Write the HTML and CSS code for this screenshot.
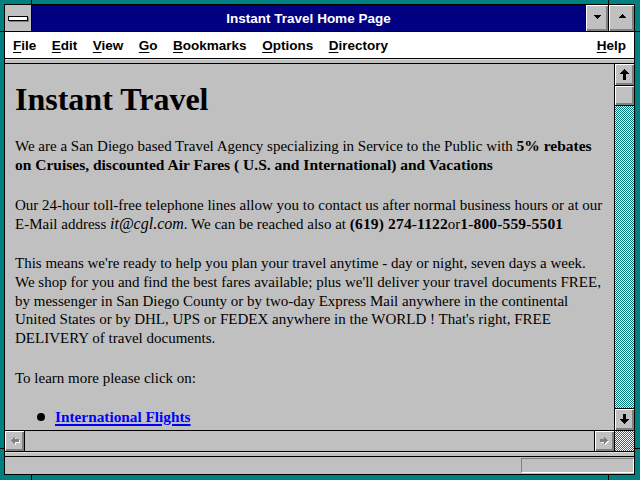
FILE: index.html
```html
<!DOCTYPE html>
<html lang="en">
<head>
<meta charset="utf-8">
<title>Instant Travel Home Page</title>
<link rel="stylesheet" href="styles.css">
</head>
<body>
<div class="window">
  <div class="tick tick-top-l"></div>
  <div class="tick tick-top-r"></div>
  <div class="tick tick-bot-l"></div>
  <div class="tick tick-bot-r"></div>
  <div class="tick tick-left-t"></div>
  <div class="tick tick-left-b"></div>
  <div class="tick tick-right-t"></div>
  <div class="tick tick-right-b"></div>
  <div class="inner">
    <div class="titlebar">
      <div class="sysmenu"><div class="sysbar"></div></div>
      <div class="title">Instant Travel Home Page</div>
      <div class="tbtn tbtn-min">
        <svg width="22" height="26" viewBox="0 0 22 26" shape-rendering="crispEdges"><g fill="#000"><rect x="8" y="10" width="7" height="1"/><rect x="9" y="11" width="5" height="1"/><rect x="10" y="12" width="3" height="1"/><rect x="11" y="13" width="1" height="1"/></g></svg>
      </div>
      <div class="tbtn tbtn-max">
        <svg width="25" height="26" viewBox="0 0 25 26" shape-rendering="crispEdges"><g fill="#000"><rect x="13" y="9" width="1" height="1"/><rect x="12" y="10" width="3" height="1"/><rect x="11" y="11" width="5" height="1"/><rect x="10" y="12" width="7" height="1"/></g></svg>
      </div>
    </div>
    <div class="menubar">
      <span class="mi"><u>F</u>ile</span>
      <span class="mi"><u>E</u>dit</span>
      <span class="mi"><u>V</u>iew</span>
      <span class="mi"><u>G</u>o</span>
      <span class="mi"><u>B</u>ookmarks</span>
      <span class="mi"><u>O</u>ptions</span>
      <span class="mi"><u>D</u>irectory</span>
      <span class="mi mi-help"><u>H</u>elp</span>
    </div>
    <div class="band"></div>
    <div class="view">
      <div class="content">
        <h1 class="heading">Instant Travel</h1>
        <p class="para">We are a San Diego based Travel Agency specializing in Service to the Public with <b class="strong">5% rebates<br>on Cruises, discounted Air Fares ( U.S. and International) and Vacations</b></p>
        <p class="para">Our 24-hour toll-free telephone lines allow you to contact us after normal business hours or at our<br>E-Mail address <i class="em">it@cgl.com</i>. We can be reached also at <b class="strong phone">(619) 274-1122</b>or<b class="strong phone">1-800-559-5501</b></p>
        <p class="para">This means we're ready to help you plan your travel anytime - day or night, seven days a week.<br>We shop for you and find the best fares available; plus we'll deliver your travel documents FREE,<br>by messenger in San Diego County or by two-day Express Mail anywhere in the continental<br>United States or by DHL, UPS or FEDEX anywhere in the WORLD ! That's right, FREE<br>DELIVERY of travel documents.</p>
        <p class="para">To learn more please click on:</p>
        <ul class="links">
          <li class="item"><a class="link" href="#">International Flights</a></li>
        </ul>
      </div>
      <div class="vscroll">
        <div class="sbtn sbtn-up">
          <svg width="19" height="21" viewBox="0 0 19 21" shape-rendering="crispEdges"><g fill="#000"><rect x="9" y="5" width="1" height="1"/><rect x="8" y="6" width="3" height="1"/><rect x="7" y="7" width="5" height="1"/><rect x="6" y="8" width="7" height="1"/><rect x="5" y="9" width="9" height="1"/><rect x="8" y="10" width="3" height="6"/></g></svg>
        </div>
        <div class="thumb"></div>
        <div class="track"></div>
        <div class="sbtn sbtn-down">
          <svg width="19" height="21" viewBox="0 0 19 21" shape-rendering="crispEdges"><g fill="#000"><rect x="8" y="5" width="3" height="5"/><rect x="5" y="10" width="9" height="1"/><rect x="6" y="11" width="7" height="1"/><rect x="7" y="12" width="5" height="1"/><rect x="8" y="13" width="3" height="1"/><rect x="9" y="14" width="1" height="1"/></g></svg>
        </div>
      </div>
    </div>
    <div class="hscroll">
      <div class="sbtn hbtn hbtn-left">
        <svg width="19" height="20" viewBox="0 0 19 20" shape-rendering="crispEdges">
          <g fill="#fff" transform="translate(1,1)"><rect x="6" y="9" width="1" height="1"/><rect x="7" y="8" width="1" height="3"/><rect x="8" y="7" width="1" height="5"/><rect x="9" y="6" width="1" height="7"/><rect x="10" y="8" width="4" height="3"/></g>
          <g fill="#808080"><rect x="6" y="9" width="1" height="1"/><rect x="7" y="8" width="1" height="3"/><rect x="8" y="7" width="1" height="5"/><rect x="9" y="6" width="1" height="7"/><rect x="10" y="8" width="4" height="3"/></g>
        </svg>
      </div>
      <div class="htrack"></div>
      <div class="sbtn hbtn hbtn-right">
        <svg width="19" height="20" viewBox="0 0 19 20" shape-rendering="crispEdges">
          <g fill="#fff" transform="translate(1,1)"><rect x="12" y="9" width="1" height="1"/><rect x="11" y="8" width="1" height="3"/><rect x="10" y="7" width="1" height="5"/><rect x="9" y="6" width="1" height="7"/><rect x="5" y="8" width="4" height="3"/></g>
          <g fill="#808080"><rect x="12" y="9" width="1" height="1"/><rect x="11" y="8" width="1" height="3"/><rect x="10" y="7" width="1" height="5"/><rect x="9" y="6" width="1" height="7"/><rect x="5" y="8" width="4" height="3"/></g>
        </svg>
      </div>
      <div class="corner"></div>
    </div>
    <div class="band band-low"></div>
    <div class="status"><div class="statbox"></div></div>
  </div>
</div>
</body>
</html>
```
FILE: styles.css
```css
html, body {
  margin: 0;
  padding: 0;
  background: #008080;
}

.window {
  position: relative;
  width: 640px;
  height: 480px;
  box-sizing: border-box;
  padding: 4px 5px 5px 4px;
  background: #008080;
}

.tick {
  position: absolute;
  background: #000;
}
.tick-top-l { left: 31px; top: 0; width: 1px; height: 4px; }
.tick-top-r { left: 608px; top: 0; width: 1px; height: 4px; }
.tick-bot-l { left: 31px; bottom: 0; width: 1px; height: 5px; }
.tick-bot-r { left: 608px; bottom: 0; width: 1px; height: 5px; }
.tick-left-t { left: 0; top: 31px; width: 4px; height: 1px; }
.tick-left-b { left: 0; top: 448px; width: 4px; height: 1px; }
.tick-right-t { right: 0; top: 31px; width: 5px; height: 1px; }
.tick-right-b { right: 0; top: 448px; width: 5px; height: 1px; }

.inner {
  height: 100%;
  box-sizing: border-box;
  border: 1px solid #000;
  background: #c0c0c0;
  display: flex;
  flex-direction: column;
}

/* Title bar */
.titlebar {
  display: flex;
  height: 26px;
  flex: none;
  border-bottom: 1px solid #000;
}
.sysmenu {
  width: 26px;
  flex: none;
  background: #c0c0c0;
  border-right: 1px solid #000;
  display: flex;
  align-items: center;
  justify-content: center;
}
.sysbar {
  width: 18px;
  height: 3px;
  background: #fff;
  border: 1px solid #000;
  box-shadow: 1px 1px 0 #808080;
  margin: 0 1px 0 0;
}
.title {
  flex: 1;
  background: #000080;
  color: #fff;
  font: 700 13.5px/27px "Liberation Sans", Arial, sans-serif;
  text-align: center;
  white-space: nowrap;
}
.tbtn {
  flex: none;
  border-left: 1px solid #000;
  background: #c0c0c0;
  box-shadow: inset 1px 1px 0 #fff, inset -1px -1px 0 #808080, inset -2px -2px 0 #808080;
}
.tbtn svg { display: block; }
.tbtn-min { width: 22px; }
.tbtn-max { width: 25px; }

/* Menu bar */
.menubar {
  flex: none;
  height: 26px;
  background: #fff;
  border-bottom: 1px solid #000;
  display: flex;
  align-items: center;
  gap: 15.5px;
  padding: 0 8px;
  font: 700 13.5px "Liberation Sans", Arial, sans-serif;
  color: #000;
  white-space: nowrap;
}
.mi u { text-decoration-thickness: 1px; text-underline-offset: 2px; }
.mi-help { margin-left: auto; }

.band {
  flex: none;
  height: 4px;
  background: #c0c0c0;
  box-shadow: inset 0 1px 0 #dfdfdf;
  border-bottom: 1px solid #000;
}
.band-low {
  border-top: 1px solid #000;
}

/* Main view */
.view {
  flex: none;
  height: 366px;
  display: flex;
}
.content {
  flex: 1;
  min-width: 0;
  overflow: hidden;
  padding: 0 10px;
  background: #c0c0c0;
  color: #000;
  font: 15px/18.8px "Liberation Serif", "Times New Roman", serif;
}
.heading {
  font: 700 32px/37px "Liberation Serif", "Times New Roman", serif;
  margin: 17.2px 0 19.3px;
  white-space: nowrap;
}
.para {
  margin: 0 0 20.7px;
  white-space: nowrap;
}
.strong {
  font-weight: 700;
  font-size: 15.5px;
}
.phone {
  letter-spacing: 0.15px;
}
.em {
  font-style: italic;
  font-size: 16px;
}
.links {
  margin: 0;
  padding-left: 40px;
  list-style: none;
}
.item::before {
  content: "";
  display: inline-block;
  width: 8px;
  height: 8px;
  border-radius: 50%;
  background: #000;
  margin-left: -18px;
  margin-right: 10px;
  vertical-align: 1px;
}
.link {
  color: #0000ff;
  font-weight: 700;
  font-size: 15.3px;
  text-decoration: underline;
  text-decoration-thickness: 2px;
  text-underline-offset: 2px;
}

.vscroll {
  flex: none;
  width: 19px;
  border-left: 1px solid #000;
  display: flex;
  flex-direction: column;
}
.sbtn {
  background: #c0c0c0;
  box-shadow: inset 1px 1px 0 #fff, inset -1px -1px 0 #808080, inset -2px -2px 0 #808080;
  flex: none;
}
.sbtn svg { display: block; }
.sbtn-up {
  height: 21px;
  border-bottom: 1px solid #000;
}
.thumb {
  flex: none;
  height: 19px;
  border-bottom: 1px solid #000;
  background: #c0c0c0;
  box-shadow: inset 1px 1px 0 #fff, inset -1px -1px 0 #808080, inset -2px -2px 0 #808080;
}
.track, .corner {
  background-color: #fff;
  background-image: conic-gradient(#008080 25%, #fff 0 50%, #008080 0 75%, #fff 0);
  background-size: 2px 2px;
}
.track { flex: 1; }
.sbtn-down {
  height: 21px;
  border-top: 1px solid #000;
}

/* Horizontal scrollbar */
.hscroll {
  flex: none;
  height: 20px;
  border-top: 1px solid #000;
  display: flex;
}
.hbtn { width: 19px; height: 20px; }
.hbtn-left { border-right: 1px solid #000; }
.hbtn-right { border-left: 1px solid #000; border-right: 1px solid #000; }
.htrack { flex: 1; background: #c0c0c0; }
.corner { width: 19px; flex: none; }

/* Status bar */
.status {
  flex: none;
  height: 17px;
  display: flex;
  justify-content: flex-end;
  align-items: flex-start;
}
.statbox {
  width: 111px;
  height: 13px;
  margin-top: 1px;
  border: 1px solid;
  border-color: #808080 #fff #fff #808080;
}
```
